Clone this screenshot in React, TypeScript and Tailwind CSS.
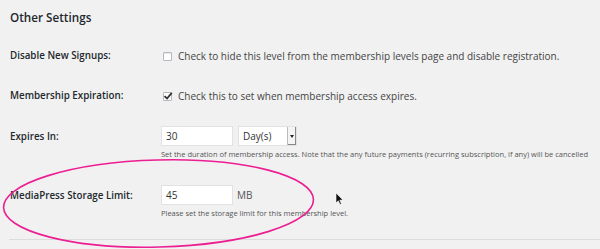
import React from "react";

const labelCls =
  "w-[151px] shrink-0 text-[9.8px] font-semibold text-[#23282d]";
const descCls = "text-[7.5px] text-[#555] mt-[3px] whitespace-nowrap";

const App = () => {
  return (
    <div
      className="relative w-[600px] h-[249px] overflow-hidden bg-[#f1f1f1] text-[#444]"
      style={{ fontFamily: '"Open Sans", "Noto Sans", sans-serif' }}
    >
      <div className="pl-[10px] pt-[8px]">
        <h3 className="text-[11.7px] font-semibold text-[#23282d] leading-[18px]">
          Other Settings
        </h3>

        <div className="flex items-center mt-[21px] h-[18px]">
          <div className={labelCls}>Disable New Signups:</div>
          <div className="flex items-center gap-[6px] pl-[2px]">
            <span className="w-[9px] h-[9px] border border-[#b4b9be] bg-white rounded-[1px] shadow-[inset_0_1px_1px_rgba(0,0,0,0.1)]" />
            <span className="text-[10px] text-[#444]">
              Check to hide this level from the membership levels page and
              disable registration.
            </span>
          </div>
        </div>

        <div className="flex items-center mt-[22px] h-[18px]">
          <div className={labelCls}>Membership Expiration:</div>
          <div className="flex items-center gap-[6px] pl-[2px]">
            <span className="relative w-[9px] h-[9px] border border-[#b4b9be] bg-white rounded-[1px]">
              <svg
                viewBox="0 0 10 10"
                className="absolute left-[-1px] top-[-2px] w-[10px] h-[10px]"
              >
                <path
                  d="M1.5 5.2 L4 7.5 L8.8 1.8"
                  fill="none"
                  stroke="#333"
                  strokeWidth="1.8"
                />
              </svg>
            </span>
            <span className="text-[10px] text-[#444]">
              Check this to set when membership access expires.
            </span>
          </div>
        </div>

        <div className="flex mt-[21px]">
          <div className={`${labelCls} pt-[4px]`}>Expires In:</div>
          <div className="flex flex-col">
            <div className="flex items-center gap-[5px]">
              <div className="w-[72px] h-[20px] bg-white border border-[#e2e2e2] px-[4px] flex items-center text-[10px] text-[#333]">
                30
              </div>
              <div className="w-[59px] h-[20px] bg-white border border-[#e2e2e2] flex items-center justify-between text-[10px] text-[#333]">
                <span className="pl-[4px]">Day(s)</span>
                <span className="w-[9px] h-[18px] bg-[#f4f4f4] border-l border-[#bbb] shadow-[inset_-1px_-1px_0_#888] flex items-center justify-center">
                  <span className="block w-0 h-0 border-l-[2px] border-r-[2px] border-t-[3px] border-l-transparent border-r-transparent border-t-[#222]" />
                </span>
              </div>
            </div>
            <div className={descCls}>
              Set the duration of membership access. Note that the any future
              payments (recurring subscription, if any) will be cancelled
            </div>
          </div>
        </div>

        <div className="flex mt-[25px]">
          <div className={`${labelCls} pt-[4px]`}>MediaPress Storage Limit:</div>
          <div className="flex flex-col">
            <div className="flex items-center gap-[4px]">
              <div className="w-[72px] h-[20px] bg-white border border-[#e2e2e2] px-[4px] flex items-center text-[10px] text-[#333]">
                45
              </div>
              <span className="text-[10px] text-[#555]">MB</span>
            </div>
            <div className={descCls}>
              Please set the storage limit for this membership level.
            </div>
          </div>
        </div>
      </div>

      <div className="absolute left-[9px] right-0 top-[239px] h-px bg-[#dcdcdc]" />

      <svg
        className="absolute left-0 top-0 w-[600px] h-[249px] pointer-events-none"
        viewBox="0 0 600 249"
      >
        <ellipse
          cx="158.5"
          cy="203.5"
          rx="155"
          ry="43.5"
          transform="rotate(-1.5 158.5 203.5)"
          fill="none"
          stroke="#ec1e92"
          strokeWidth="1.6"
        />
        <path
          d="M336 193 L336 203 L338.3 200.8 L340 204.5 L341.4 203.8 L339.8 200.2 L343 200 Z"
          fill="#111"
          stroke="#fff"
          strokeWidth="0.6"
        />
      </svg>
    </div>
  );
};

export default App;
